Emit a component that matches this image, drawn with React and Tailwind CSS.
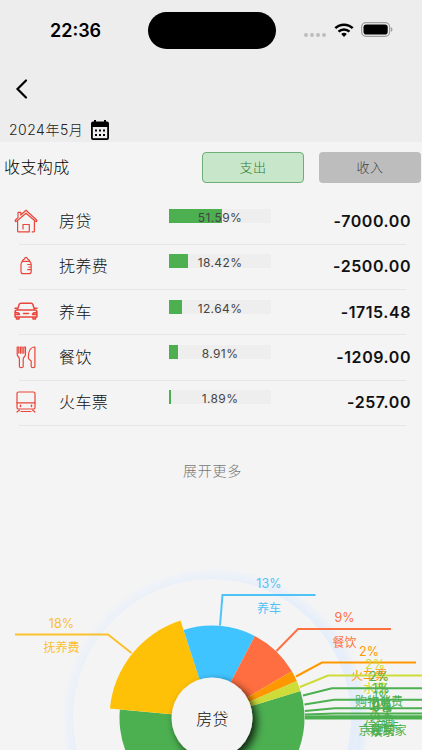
const categories = [
  { name: "房贷", percent: 51.59, amount: "-7000.00", icon: HouseIcon },
  { name: "抚养费", percent: 18.42, amount: "-2500.00", icon: BottleIcon },
  { name: "养车", percent: 12.64, amount: "-1715.48", icon: CarIcon },
  { name: "餐饮", percent: 8.91, amount: "-1209.00", icon: CutleryIcon },
  { name: "火车票", percent: 1.89, amount: "-257.00", icon: TrainIcon },
];

const slices = [
  { from: -17, to: 185.3, radius: 92.5, color: "#4caf50" },
  { from: 185.3, to: 252.1, radius: 102.5, color: "#ffc107" },
  { from: 252.1, to: 297.6, radius: 92.5, color: "#40c4ff" },
  { from: 297.6, to: 329.7, radius: 92.5, color: "#ff6e40" },
  { from: 329.7, to: 336.5, radius: 92.5, color: "#ff9800" },
  { from: 336.5, to: 343, radius: 92.5, color: "#cddc39" },
];

const labels = [
  { text: "抚养费", percent: "18%", color: "#fbc02d", x: 61.5, y: 84.5, line: "15,84.5 108,84.5 131.5,103" },
  { text: "养车", percent: "13%", color: "#4fc3f7", x: 269, y: 45, line: "220,75.5 222.5,45 315.5,45" },
  { text: "餐饮", percent: "9%", color: "#ff7043", x: 344.5, y: 79, line: "276.5,101 298,79 391,79" },
  { text: "火车票", percent: "2%", color: "#ff9800", x: 369, y: 112.5, line: "296,126.5 322,112.5 416,112.5" },
  { text: "水费", percent: "2%", color: "#cddc39", x: 375, y: 125.5, line: "300,137 328,125.5 422,125.5" },
  { text: "购物消费", percent: "2%", color: "#4caf50", x: 379, y: 138.2, line: "303,145.5 332,138.2 426,138.2" },
  { text: "水果", percent: "1%", color: "#4caf50", x: 381, y: 149.8, line: "304.5,154.5 334,149.8 428,149.8" },
  { text: "交通", percent: "1%", color: "#4caf50", x: 381.5, y: 158.2, line: "305,161 335,158.2 428,158.2" },
  { text: "信用卡", percent: "0%", color: "#4caf50", x: 382, y: 163.6, line: "305,164.5 335,163.6 428,163.6" },
  { text: "理发", percent: "0%", color: "#4caf50", x: 382, y: 166.3, line: "305,166.5 335,166.3 428,166.3" },
  { text: "京东到家", percent: "0%", color: "#4caf50", x: 382.5, y: 167.5, line: "305,167.5 335,167.5 428,167.5" },
  { text: "娱乐", percent: "0%", color: "#4caf50", x: 382.5, y: 168.4, line: "305,168.4 335,168.4 428,168.4" },
];

const CENTER = { x: 212, y: 168 };

function point(angle, radius) {
  const rad = (angle * Math.PI) / 180;
  return `${CENTER.x + radius * Math.cos(rad)} ${CENTER.y + radius * Math.sin(rad)}`;
}

function slicePath({ from, to, radius }) {
  const large = to - from > 180 ? 1 : 0;
  return `M${CENTER.x} ${CENTER.y} L${point(from, radius)} A${radius} ${radius} 0 ${large} 1 ${point(to, radius)} Z`;
}

function RowIcon({ children }) {
  return (
    <svg
      viewBox="0 0 24 24"
      className="h-6 w-6 fill-none stroke-[#ea453b]"
      strokeWidth="1.2"
      strokeLinecap="round"
      strokeLinejoin="round"
    >
      {children}
    </svg>
  );
}

function HouseIcon() {
  return (
    <RowIcon>
      <path d="M12 1.2 6.8 6V3.4H4v5.2L1.4 11c-.7.9.3 2 1.2 1.3L12 4.2l9.4 8.1c.9.7 1.9-.4 1.2-1.3Z" />
      <path d="M3.6 12.5V22c0 .6.3.9.9.9h10.8v-7.4H9V20M20.4 12.5V22c0 .6-.3.9-.9.9h-1.3" />
    </RowIcon>
  );
}

function BottleIcon() {
  return (
    <RowIcon>
      <path d="M8.200 7.400c0-1.400 1.400-1.700 2.200-2.300.3-.8.5-1.800 1.600-1.800s1.300 1 1.600 1.800c.8.6 2.200.9 2.200 2.300Z" />
      <path d="M8.600 7.600C7.400 8.300 7 9.200 7 10.600v6.800c0 1.600.8 2.300 2.200 2.300h5.800c1.400 0 2.200-.7 2.200-2.300v-6.800c0-1.400-.5-2.300-1.700-3M13.700 10.500H17M14.700 13H17M13.700 15.600H17" />
    </RowIcon>
  );
}

function CarIcon() {
  return (
    <RowIcon>
      <g strokeWidth="1.5">
        <path d="M3.500 10.500 5.200 5.300c.3-.8.8-1.100 1.600-1.100h10.400c.8 0 1.300.3 1.600 1.100l1.700 5.200M1 9.300h2M21 9.300h2M3 11h18c1.300 0 1.900.7 1.900 1.900v5.200H1.100v-5.200C1.100 11.700 1.700 11 3 11ZM2.500 18.300V20H5v-1.600M19 18.400V20h2.500v-1.700" />
        <path d="M1.500 13.500c2.500 0 3.700.5 4 1.900h-4M22.500 13.500c-2.500 0-3.700.5-4 1.900h4M9.500 14.500h5" />
      </g>
    </RowIcon>
  );
}

function CutleryIcon() {
  return (
    <RowIcon>
      <path d="M3.200 2v7.500c0 2 2.200 2.500 2.200 4.500v7.500c0 1.500 3.800 1.500 3.800 0V14c0-2 2.300-2.500 2.300-4.500V2H9.800v6.200M4.800 8.200V2H3.200M6.500 8.200V2h1.600v6.200" />
      <path d="M20.900 2v19.500c0 1.500-3.700 1.500-3.700 0v-5.300c0-1-2.900-1.200-2.900-3.700C14.300 7.500 16 2 20.900 2Z" />
    </RowIcon>
  );
}

function TrainIcon() {
  return (
    <RowIcon>
      <rect x="3" y="2" width="18" height="17" rx="1.6" />
      <path d="M3 12.800h18" />
      <path d="M6.500 15.200v1.400M17.500 15.200v1.400" strokeWidth="1.5" />
      <path d="M5.500 20 3 22M18.500 20l2.500 2M7 21.500h10" />
    </RowIcon>
  );
}

function StatusBar() {
  return (
    <div className="flex h-[60px] items-center">
      <span className="ml-[50px] w-[98px] text-[18px] font-semibold">22:36</span>
      <div className="h-[37px] w-[128px] rounded-full bg-black" />
      <div className="mt-[9px] ml-7 flex gap-0.5">
        <i className="size-1 rounded-full bg-[#bdbdbd]" />
        <i className="size-1 rounded-full bg-[#bdbdbd]" />
        <i className="size-1 rounded-full bg-[#bdbdbd]" />
        <i className="size-1 rounded-full bg-[#bdbdbd]" />
      </div>
      <svg viewBox="0 0 20 14" className="mb-px ml-2 h-[14px] w-5 fill-none stroke-black" strokeWidth="2.5">
        <path d="M1.300 5.200a12.500 12.500 0 0 1 17.400 0M4.500 8.600a8 8 0 0 1 11 0" />
        <path d="M7.200 11a4.200 4.200 0 0 1 5.600 0L10 13.900Z" className="fill-black stroke-none" />
      </svg>
      <svg viewBox="0 0 32 15" className="mb-px ml-[7px] h-[15px] w-8">
        <rect x=".6" y=".6" width="28" height="13.8" rx="4.3" fill="none" stroke="#a0a0a0" strokeWidth="1.2" />
        <rect x="2.5" y="2.5" width="24.2" height="10" rx="2.8" />
        <path d="M29.8 5.200c2.200.4 2.200 4.200 0 4.600Z" fill="#a0a0a0" />
      </svg>
    </div>
  );
}

function CategoryRow({ category }) {
  const Icon = category.icon;
  return (
    <li className="relative flex h-[45.3px] items-center">
      <div className="ml-[14px] w-[45px] pb-[3px]">
        <Icon />
      </div>
      <span className="mb-[2px] w-[110px] text-[16px] font-light tracking-[0.4px] text-[#111]">{category.name}</span>
      <div className="relative mb-[12px] h-[14px] w-[102px] bg-[#eee]">
        <div className="h-full bg-[#4caf50]" style={{ width: `${category.percent}%` }} />
        <span className="absolute inset-0 top-[2px] text-center text-[12px] leading-[14px] tracking-[0.4px] text-[#444]">
          {category.percent.toFixed(2)}%
        </span>
      </div>
      <span className="mr-[11px] mb-[2px] ml-auto text-[16px] font-semibold tracking-[0.55px] text-[#111]">
        {category.amount}
      </span>
      <div className="absolute right-4 bottom-0 left-[19px] h-px bg-[#e6e6e6]" />
    </li>
  );
}

function ExpenseChart() {
  return (
    <svg viewBox="0 0 422 200" className="block h-[200px] w-[422px] shrink-0">
      <defs>
        <filter id="halo" x="-20%" y="-20%" width="140%" height="140%">
          <feGaussianBlur stdDeviation="5" />
        </filter>
        <filter id="soft" x="-20%" y="-20%" width="140%" height="140%">
          <feGaussianBlur stdDeviation="1.5" />
        </filter>
        <filter id="hub" x="-50%" y="-50%" width="200%" height="200%">
          <feDropShadow dx="4" dy="4" stdDeviation="4" floodColor="#000" floodOpacity="0.8" />
        </filter>
      </defs>
      <circle cx="218" cy="174" r="145" fill="#dbe9fb" filter="url(#halo)" />
      <circle cx="212" cy="168" r="148" fill="#ebf1fb" opacity="0.6" filter="url(#soft)" />
      <circle cx="212" cy="168" r="139" fill="#f4f4f4" />
      {slices.map((slice) => (
        <path key={slice.color} d={slicePath(slice)} fill={slice.color} />
      ))}
      {labels.map((label) => (
        <g key={label.text} fill={label.color} textAnchor="middle">
          <polyline points={label.line} fill="none" stroke={label.color} strokeWidth="2" />
          <text x={label.x} y={label.y - 7} fontSize="12.5" letterSpacing="0.1">
            {label.percent}
          </text>
          <text x={label.x} y={label.y + 17.5} fontSize="12">
            {label.text}
          </text>
        </g>
      ))}
      <circle cx="212" cy="168" r="40.5" fill="#f4f4f4" filter="url(#hub)" />
      <text x="212.5" y="174.5" textAnchor="middle" fontSize="16" letterSpacing="0.3" fill="#111" className="font-light">
        房贷
      </text>
    </svg>
  );
}

export default function App() {
  return (
    <div className="flex h-[750px] w-[422px] flex-col overflow-hidden bg-[#f4f4f4] font-[Inter,'Noto_Sans_CJK_SC',sans-serif] text-black">
      <header className="h-[142px] shrink-0 bg-[#ededed]">
        <StatusBar />
        <button className="mt-[18px] ml-[15px] block" aria-label="返回">
          <svg viewBox="0 0 14 22" className="h-[22px] w-[14px] fill-none stroke-black" strokeWidth="2.2" strokeLinecap="round">
            <path d="M11 2.500 2.500 11l8.500 8.500" />
          </svg>
        </button>
        <div className="mt-[18px] flex h-6 items-center">
          <span className="mb-[2px] ml-[9px] w-[81px] text-[14px] font-light tracking-[0.5px] whitespace-nowrap text-[#222]">
            2024年5月
          </span>
          <svg viewBox="0 0 20 22" className="h-[22px] w-5">
            <path d="M3 2.500h1V1h2v1.500h8V1h2v1.500h1a2 2 0 0 1 2 2V19a2 2 0 0 1-2 2H3a2 2 0 0 1-2-2V4.500a2 2 0 0 1 2-2Z" />
            <path d="M2.800 8h14.400v11.200H2.800Z" fill="#ededed" />
            <path d="M5 10.500h2v2H5zM9 10.500h2v2H9zM13 10.500h2v2h-2zM5 15h2v2H5zM9 15h2v2H9zM13 15h2v2h-2z" />
          </svg>
        </div>
      </header>

      <div className="flex h-[57.5px] shrink-0 items-start pt-[10px]">
        <h1 className="ml-1 w-[198px] text-[16px] leading-[30px] font-light tracking-[0.4px]">收支构成</h1>
        <button className="h-[31px] w-[102px] rounded-[4px] border border-[#6fae76] bg-[#c8e6c9] text-[13px] leading-[29px] font-light tracking-[0.4px] text-[#2e7d32]">
          支出
        </button>
        <button className="ml-[15px] h-[31px] w-[102px] rounded-[4px] bg-[#bdbdbd] text-[13px] leading-[29px] font-light tracking-[0.4px] text-[#444]">
          收入
        </button>
      </div>

      <ul className="shrink-0">
        {categories.map((category) => (
          <CategoryRow key={category.name} category={category} />
        ))}
      </ul>

      <button className="h-[124px] shrink-0 pb-[35px] pl-[3px] text-[14px] font-light tracking-[0.7px] text-[#777]">
        展开更多
      </button>
      <ExpenseChart />
    </div>
  );
}
